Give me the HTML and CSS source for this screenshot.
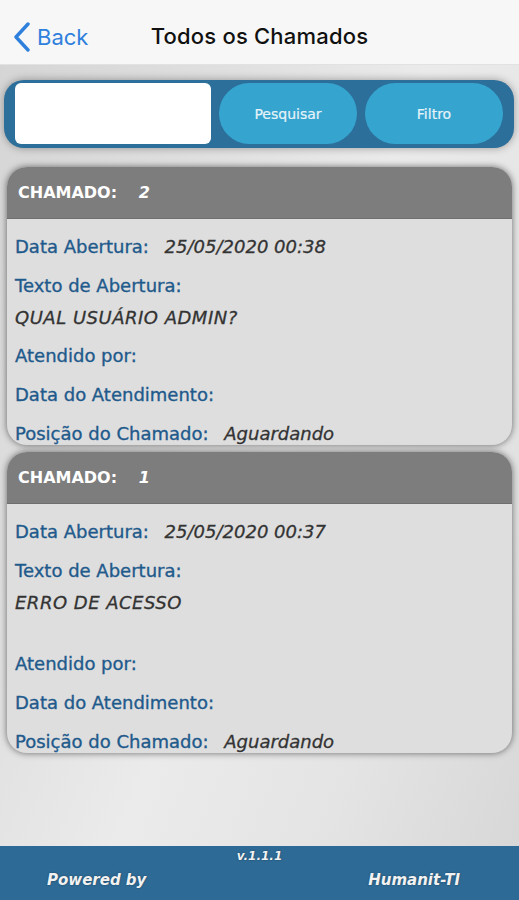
FILE: index.html
```html
<!DOCTYPE html>
<html lang="pt-BR">
<head>
  <meta charset="UTF-8">
  <meta name="viewport" content="width=device-width, initial-scale=1.0">
  <title>Todos os Chamados</title>
  <link rel="stylesheet" href="styles.css">
</head>
<body>
  <div class="page">
    <nav class="topbar">
      <a class="back" href="#">
        <svg class="chevron" width="18" height="30" viewBox="0 0 18 30">
          <path d="M15 2 L3 15 L15 28" fill="none" stroke="#2f80dd" stroke-width="3.4" stroke-linecap="round" stroke-linejoin="round"/>
        </svg>
        <span>Back</span>
      </a>
      <h1>Todos os Chamados</h1>
    </nav>

    <main class="content">
      <!-- Search bar -->
      <div class="search">
        <input class="search-input" type="text">
        <button class="search-button">Pesquisar</button>
        <button class="search-button">Filtro</button>
      </div>

      <!-- Chamado 2 -->
      <div class="card">
        <div class="card-head">CHAMADO: <em>2</em></div>
        <div class="card-body">
          <div class="field"><span class="label">Data Abertura:</span> <span class="value">25/05/2020 00:38</span></div>
          <div class="field"><span class="label">Texto de Abertura:</span></div>
          <div class="text">QUAL USUÁRIO ADMIN?</div>
          <div class="field"><span class="label">Atendido por:</span></div>
          <div class="field"><span class="label">Data do Atendimento:</span></div>
          <div class="field"><span class="label">Posição do Chamado:</span> <span class="value">Aguardando</span></div>
        </div>
      </div>

      <!-- Chamado 1 -->
      <div class="card">
        <div class="card-head">CHAMADO: <em>1</em></div>
        <div class="card-body">
          <div class="field"><span class="label">Data Abertura:</span> <span class="value">25/05/2020 00:37</span></div>
          <div class="field"><span class="label">Texto de Abertura:</span></div>
          <div class="text text-long">ERRO DE ACESSO</div>
          <div class="field"><span class="label">Atendido por:</span></div>
          <div class="field"><span class="label">Data do Atendimento:</span></div>
          <div class="field"><span class="label">Posição do Chamado:</span> <span class="value">Aguardando</span></div>
        </div>
      </div>
    </main>

    <footer class="footer">
      <div class="version">v.1.1.1</div>
      <div class="credits">
        <span>Powered by</span>
        <span>Humanit-TI</span>
      </div>
    </footer>
  </div>
</body>
</html>
```

FILE: styles.css
```css
* {
  box-sizing: border-box;
  margin: 0;
  padding: 0;
}

body {
  font-family: "DejaVu Sans", Verdana, sans-serif;
  background-color: #dedede;
}

.page {
  display: flex;
  flex-direction: column;
  min-height: 100vh;
  background: linear-gradient(112deg, #d4d4d4 0%, #e0e0e0 30%, #ebebeb 52%, #e4e4e4 75%, #d6d6d6 100%);
}

/* Top navigation */
.topbar {
  height: 65px;
  display: flex;
  align-items: center;
  background-color: #f7f7f7;
  border-bottom: 1px solid #e2e2e2;
  padding-top: 9px;
  position: relative;
}

.back {
  display: flex;
  align-items: center;
  gap: 6px;
  padding-left: 13px;
  color: #2f80dd;
  text-decoration: none;
  font-family: Inter, "Liberation Sans", sans-serif;
  font-size: 22px;
}

.topbar h1 {
  position: absolute;
  left: 0;
  right: 0;
  top: 23px;
  text-align: center;
  font-family: Inter, "Liberation Sans", sans-serif;
  font-size: 22px;
  font-weight: 500;
  letter-spacing: 0.2px;
  color: #111;
  pointer-events: none;
}

.content {
  flex: 1;
  padding: 15px 5px 0 4px;
}

/* Search bar */
.search {
  display: flex;
  gap: 8px;
  height: 68px;
  padding: 3px 11px 4px 11px;
  background-color: #2c6f9b;
  border-radius: 20px;
  box-shadow: 0 0 8px rgba(0, 0, 0, 0.35);
}

.search-input {
  width: 196px;
  border: none;
  border-radius: 6px;
  background-color: #fff;
}

.search-button {
  flex: 1;
  border: none;
  border-radius: 31px;
  background-color: #35a5cf;
  color: #e6f3f9;
  font-family: "DejaVu Sans", sans-serif;
  font-size: 14px;
  -webkit-text-stroke: 0.2px #e6f3f9;
  cursor: pointer;
}

/* Cards */
.card {
  margin: 19px 2px 0 3px;
  border-radius: 20px;
  overflow: hidden;
  background-color: #dedede;
  box-shadow: 0 0 7px rgba(0, 0, 0, 0.55);
}

.card + .card {
  margin-top: 7px;
}

.card-head {
  height: 51px;
  line-height: 52px;
  padding-left: 11px;
  background-color: #7d7d7d;
  color: #fff;
  font-size: 16px;
  font-weight: 600;
}

.card-head em {
  margin-left: 16px;
}

.card-body {
  padding: 8px 0 0 8px;
  border-top: 1px solid #6f6f6f;
}

.field {
  height: 39px;
  line-height: 39px;
  font-size: 18px;
  white-space: nowrap;
}

.field:last-child {
  height: 31px;
  overflow: hidden;
}

.label {
  color: #1f5a8c;
  -webkit-text-stroke: 0.35px #1f5a8c;
}

.value {
  margin-left: 10px;
  color: #333;
  font-style: italic;
  -webkit-text-stroke: 0.3px #333;
}

.text {
  line-height: 25px;
  margin-bottom: 6px;
  font-size: 18px;
  font-style: italic;
  letter-spacing: 0.5px;
  color: #333;
  -webkit-text-stroke: 0.3px #333;
}

.text-long {
  margin-bottom: 29px;
}

/* Footer */
.footer {
  height: 54px;
  background-color: #2d6a95;
  color: #f2f2f2;
  font-style: italic;
  font-weight: 600;
  text-shadow: 0 0 2px rgba(0, 0, 0, 0.4);
}

.version {
  text-align: center;
  font-size: 12px;
  line-height: 20px;
}

.credits {
  display: flex;
  justify-content: space-between;
  padding: 0 59px 0 47px;
  font-size: 15px;
  line-height: 28px;
}
```
